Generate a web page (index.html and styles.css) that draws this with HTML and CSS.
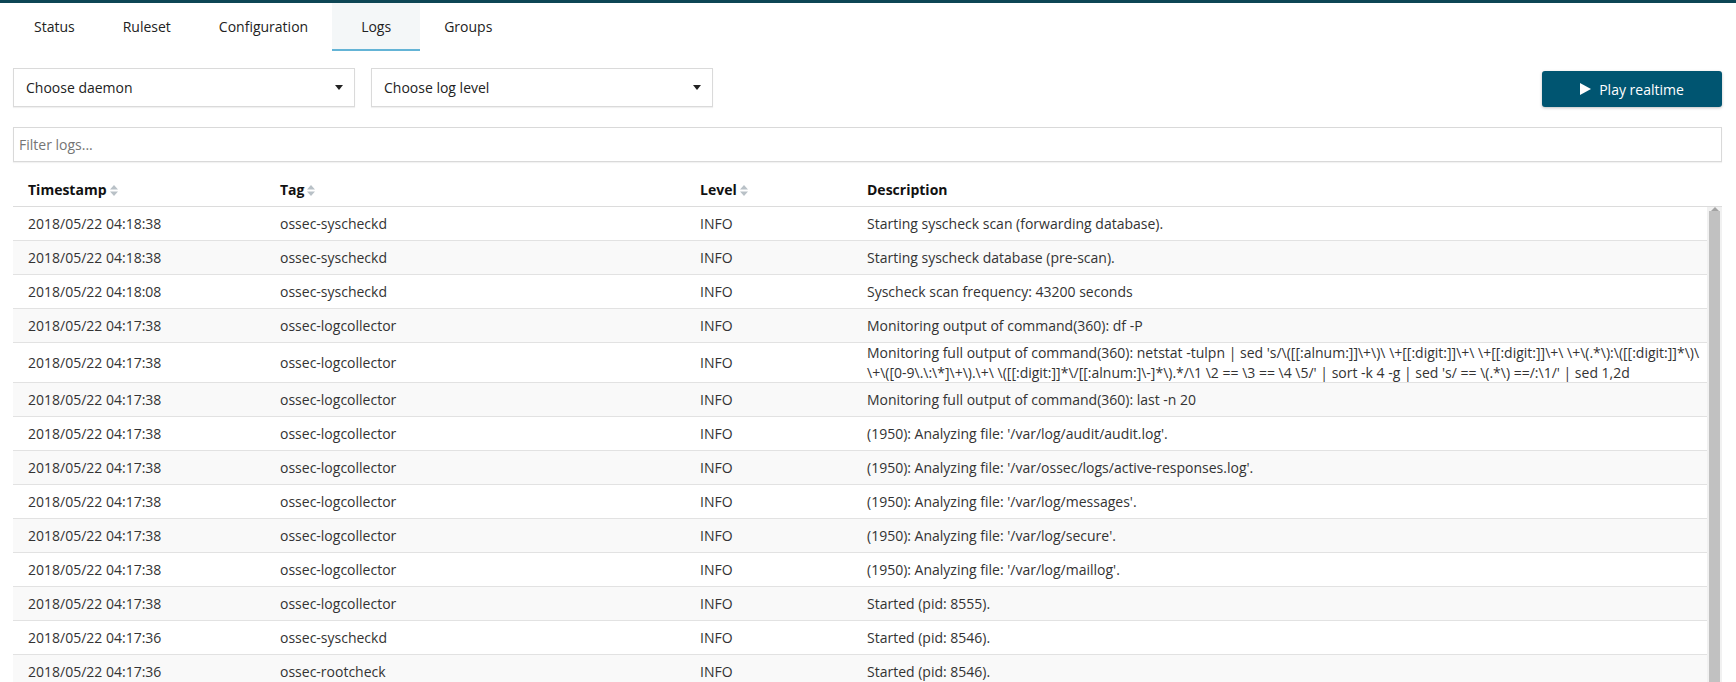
FILE: index.html
```html
<!DOCTYPE html>
<html>
<head>
<meta charset="utf-8">
<title>Logs</title>
<link rel="stylesheet" href="styles.css">
</head>
<body>
<div class="topline"></div>
<nav class="tabs">
  <div class="tab">Status</div>
  <div class="tab">Ruleset</div>
  <div class="tab">Configuration</div>
  <div class="tab active">Logs</div>
  <div class="tab">Groups</div>
</nav>
<main class="content">
  <div class="controls">
    <div class="select"><span>Choose daemon</span><i class="caret"></i></div>
    <div class="select"><span>Choose log level</span><i class="caret"></i></div>
    <button class="play"><svg class="play-icon" width="11" height="12" viewBox="0 0 11 12"><path d="M0 0 L11 6 L0 12 Z" fill="#fff"/></svg>Play realtime</button>
  </div>
  <div class="filter">Filter logs...</div>

  <table class="grid head">
    <colgroup><col class="c1"><col class="c2"><col class="c3"><col></colgroup>
    <thead>
      <tr>
        <th>Timestamp<svg class="sort" width="8" height="11" viewBox="0 0 8 11"><path d="M0 4.5 L4 0 L8 4.5 Z M0 6.5 L8 6.5 L4 11 Z" fill="#b9c1c7"/></svg></th>
        <th>Tag<svg class="sort" width="8" height="11" viewBox="0 0 8 11"><path d="M0 4.5 L4 0 L8 4.5 Z M0 6.5 L8 6.5 L4 11 Z" fill="#b9c1c7"/></svg></th>
        <th>Level<svg class="sort" width="8" height="11" viewBox="0 0 8 11"><path d="M0 4.5 L4 0 L8 4.5 Z M0 6.5 L8 6.5 L4 11 Z" fill="#b9c1c7"/></svg></th>
        <th>Description</th>
      </tr>
    </thead>
  </table>
  <div class="tablebody">
    <div class="rows">
      <table class="grid body">
        <colgroup><col class="c1"><col class="c2"><col class="c3"><col></colgroup>
        <tbody>
          <tr><td>2018/05/22 04:18:38</td><td>ossec-syscheckd</td><td>INFO</td><td class="desc">Starting syscheck scan (forwarding database).</td></tr>
          <tr><td>2018/05/22 04:18:38</td><td>ossec-syscheckd</td><td>INFO</td><td class="desc">Starting syscheck database (pre-scan).</td></tr>
          <tr><td>2018/05/22 04:18:08</td><td>ossec-syscheckd</td><td>INFO</td><td class="desc">Syscheck scan frequency: 43200 seconds</td></tr>
          <tr><td>2018/05/22 04:17:38</td><td>ossec-logcollector</td><td>INFO</td><td class="desc">Monitoring output of command(360): df -P</td></tr>
          <tr><td>2018/05/22 04:17:38</td><td>ossec-logcollector</td><td>INFO</td><td class="desc"><div class="long">Monitoring full output of command(360): netstat -tulpn | sed 's/\([[:alnum:]]\+\)\ \+[[:digit:]]\+\ \+[[:digit:]]\+\ \+\(.*\):\([[:digit:]]*\)\ \+\([0-9\.\:\*]\+\).\+\ \([[:digit:]]*\/[[:alnum:]\-]*\).*/\1 \2 == \3 == \4 \5/' | sort -k 4 -g | sed 's/ == \(.*\) ==/:\1/' | sed 1,2d</div></td></tr>
          <tr><td>2018/05/22 04:17:38</td><td>ossec-logcollector</td><td>INFO</td><td class="desc">Monitoring full output of command(360): last -n 20</td></tr>
          <tr><td>2018/05/22 04:17:38</td><td>ossec-logcollector</td><td>INFO</td><td class="desc">(1950): Analyzing file: '/var/log/audit/audit.log'.</td></tr>
          <tr><td>2018/05/22 04:17:38</td><td>ossec-logcollector</td><td>INFO</td><td class="desc">(1950): Analyzing file: '/var/ossec/logs/active-responses.log'.</td></tr>
          <tr><td>2018/05/22 04:17:38</td><td>ossec-logcollector</td><td>INFO</td><td class="desc">(1950): Analyzing file: '/var/log/messages'.</td></tr>
          <tr><td>2018/05/22 04:17:38</td><td>ossec-logcollector</td><td>INFO</td><td class="desc">(1950): Analyzing file: '/var/log/secure'.</td></tr>
          <tr><td>2018/05/22 04:17:38</td><td>ossec-logcollector</td><td>INFO</td><td class="desc">(1950): Analyzing file: '/var/log/maillog'.</td></tr>
          <tr><td>2018/05/22 04:17:38</td><td>ossec-logcollector</td><td>INFO</td><td class="desc">Started (pid: 8555).</td></tr>
          <tr><td>2018/05/22 04:17:36</td><td>ossec-syscheckd</td><td>INFO</td><td class="desc">Started (pid: 8546).</td></tr>
          <tr><td>2018/05/22 04:17:36</td><td>ossec-rootcheck</td><td>INFO</td><td class="desc">Started (pid: 8546).</td></tr>
        </tbody>
      </table>
    </div>
    <div class="vscroll">
      <div class="arrow-up"></div>
      <div class="thumb"></div>
    </div>
  </div>
</main>
</body>
</html>
```

FILE: styles.css
```css
html, body {
  margin: 0;
  padding: 0;
  overflow: hidden;
  background: #fff;
}
body {
  font-family: "Open Sans", "Noto Sans", sans-serif;
  font-size: 14px;
  color: #333;
}
.topline {
  height: 3px;
  background: #0d4655;
}
.tabs {
  display: flex;
  padding-left: 10px;
  height: 48px;
}
.tab {
  box-sizing: border-box;
  min-width: 88px;
  padding: 0 24px;
  height: 48px;
  line-height: 48px;
  text-align: center;
  color: #222;
}
.tab.active {
  background: #f4f7f8;
  border-bottom: 2px solid #64b4d6;
}
.content {
  padding: 0 14px 0 13px;
}
.controls {
  display: flex;
  align-items: flex-start;
  gap: 16px;
  margin-top: 17px;
}
.select {
  box-sizing: border-box;
  width: 342px;
  height: 39px;
  border: 1px solid #dadada;
  box-shadow: 0 1px 1px rgba(0,0,0,0.06);
  display: flex;
  align-items: center;
  justify-content: space-between;
  padding: 0 11px 0 12px;
  color: #222;
  background: #fff;
}
.caret {
  width: 0;
  height: 0;
  border-top: 5px solid #222;
  border-left: 4.5px solid transparent;
  border-right: 4.5px solid transparent;
}
.play {
  margin-left: auto;
  margin-top: 3px;
  width: 180px;
  height: 36px;
  background: #005571;
  border: none;
  border-radius: 3px;
  box-shadow: 0 1px 3px rgba(0,0,0,0.25);
  color: #fff;
  font-family: "Open Sans", "Noto Sans", sans-serif;
  font-size: 14px;
  display: flex;
  align-items: center;
  justify-content: center;
  gap: 8px;
  padding: 0;
}
.play-icon {
  display: block;
}
.filter {
  box-sizing: border-box;
  margin-top: 20px;
  height: 35px;
  border: 1px solid #d9d9d9;
  box-shadow: 0 1px 1px rgba(0,0,0,0.05);
  padding: 0 5px;
  line-height: 33px;
  color: #757575;
}
.grid {
  border-collapse: separate;
  border-spacing: 0;
  table-layout: fixed;
  width: 100%;
}
.c1 { width: 252px; }
.c2 { width: 420px; }
.c3 { width: 167px; }
.head {
  margin-top: 11px;
}
.head th {
  text-align: left;
  font-weight: 700;
  color: #111;
  height: 33px;
  padding: 0 15px;
  border-bottom: 1px solid #dcdcdc;
  white-space: nowrap;
}
.sort {
  display: inline-block;
  vertical-align: -1px;
  margin-left: 3px;
}
.tablebody {
  display: flex;
  height: 500px;
  overflow: hidden;
}
.rows {
  flex: 1;
  min-width: 0;
}
.vscroll {
  width: 15px;
  flex: none;
  background: #f1f1f1;
  display: flex;
  flex-direction: column;
  align-items: center;
}
.arrow-up {
  height: 15px;
  width: 15px;
  display: flex;
  align-items: center;
  justify-content: center;
}
.arrow-up::before {
  content: "";
  width: 0;
  height: 0;
  border-bottom: 4px solid #a3a3a3;
  border-left: 4px solid transparent;
  border-right: 4px solid transparent;
}
.thumb {
  width: 11px;
  height: 600px;
  background: #c1c1c1;
  flex: none;
}
.body td {
  height: 33px;
  padding: 0 15px;
  line-height: 19.5px;
  border-bottom: 1px solid #e2e2e2;
  vertical-align: middle;
  color: #333;
}
.body td.desc {
  padding-right: 0;
}
.long {
  margin-right: -8px;
}
.body tr:nth-child(even) td {
  background: #f9f9f9;
}
```
